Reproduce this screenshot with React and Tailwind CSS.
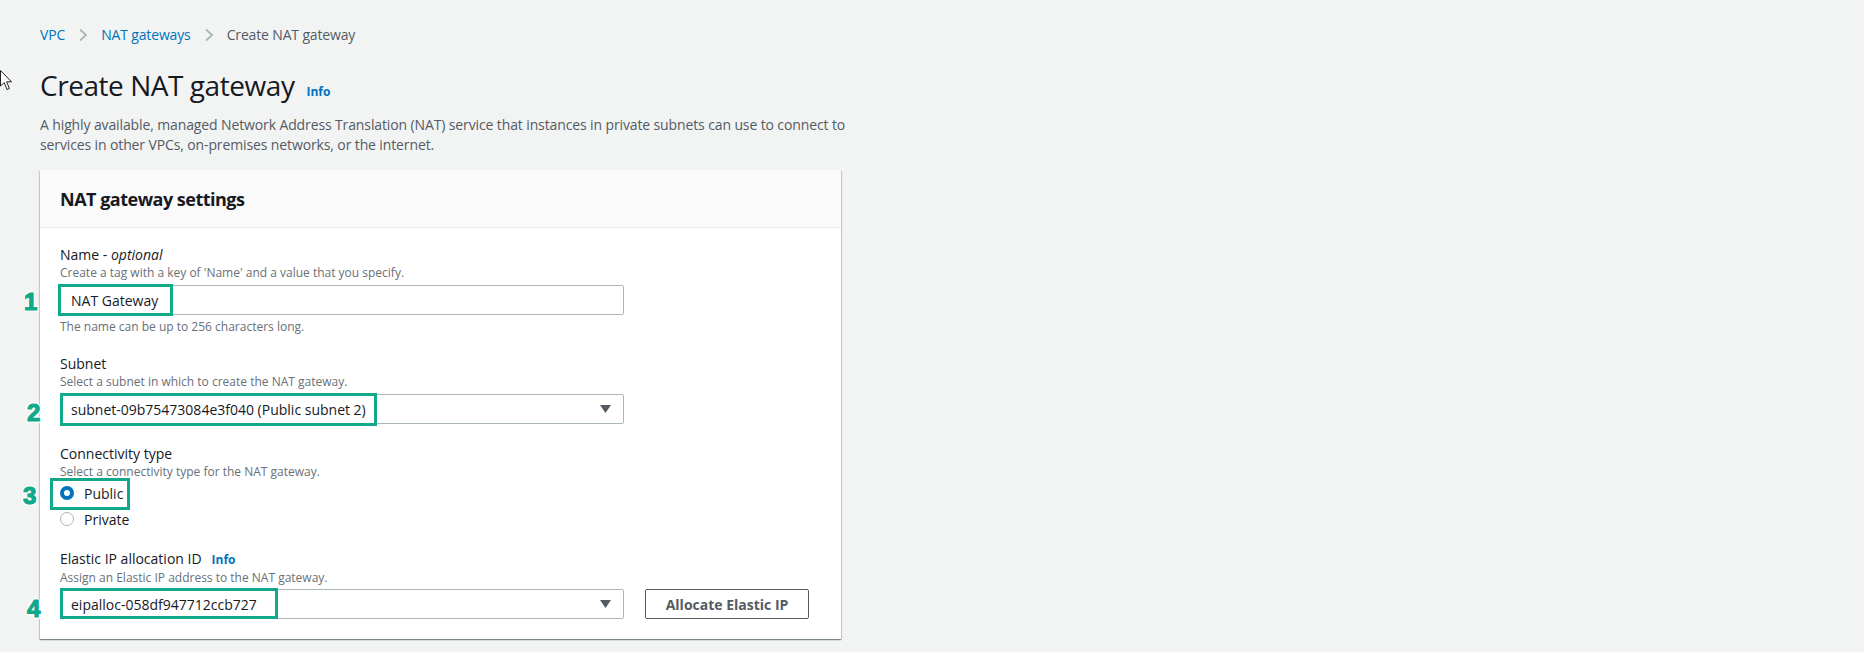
import React from "react";

const FONT = { fontFamily: '"Open Sans", "Noto Sans", Arial, sans-serif' };

function Num({ n, className }) {
  return (
    <div
      className={"absolute text-[24px] font-black leading-none text-[#12a88a] " + className}
      style={{
        fontFamily: '"Liberation Sans", Arial, sans-serif',
        WebkitTextStroke: "1.2px #12a88a",
        textShadow:
          "2px 0 0 #fff, -2px 0 0 #fff, 0 2px 0 #fff, 0 -2px 0 #fff, 1.5px 1.5px 0 #fff, -1.5px -1.5px 0 #fff, 1.5px -1.5px 0 #fff, -1.5px 1.5px 0 #fff",
      }}
    >
      {n}
    </div>
  );
}

function Caret() {
  return (
    <svg width="11" height="8" viewBox="0 0 11 8" className="absolute right-[12px] top-1/2 -translate-y-1/2">
      <path d="M0 0 H11 L5.5 8 Z" fill="#545b64" />
    </svg>
  );
}

function Chevron() {
  return (
    <svg width="10" height="14" viewBox="0 0 10 14" className="mx-[13px]">
      <path d="M2 1.5 L8 7 L2 12.5" fill="none" stroke="#aab7b8" strokeWidth="1.8" />
    </svg>
  );
}

export default function App() {
  return (
    <div className="relative min-h-[652px] w-full bg-[#f2f3f3] pl-[40px] text-[#16191f]" style={FONT}>
      {/* cursor */}
      <svg width="14" height="21" viewBox="0 0 14 21" className="absolute left-0 top-[70px]">
        <path d="M0.5 0.5 L0.5 16 L4.2 12.6 L7 19.5 L9.4 18.5 L6.6 11.8 L11.5 11.8 Z" fill="white" stroke="#222" strokeWidth="1" strokeLinejoin="round" />
      </svg>

      {/* breadcrumb */}
      <div className="flex items-center pt-[25px] text-[14px] leading-[20px] tracking-[-0.15px]">
        <span className="text-[#0073bb]">VPC</span>
        <Chevron />
        <span className="text-[#0073bb]">NAT gateways</span>
        <Chevron />
        <span className="text-[#545b64]">Create NAT gateway</span>
      </div>

      {/* title */}
      <div className="mt-[22px] flex items-baseline">
        <h1 className="text-[28px] font-normal leading-[36px] tracking-[-0.45px] text-[#16191f]">Create NAT gateway</h1>
        <span className="ml-[12px] text-[12px] font-bold text-[#0073bb]">Info</span>
      </div>

      <p className="mt-[12px] w-[820px] text-[14px] leading-[20px] tracking-[-0.12px] text-[#545b64]">
        A highly available, managed Network Address Translation (NAT) service that instances in private subnets can use to connect to services in other VPCs, on-premises networks, or the internet.
      </p>

      {/* card */}
      <div className="mt-[15px] w-[801px] bg-white shadow-[0_1px_1px_0_rgba(0,28,36,0.3),1px_1px_1px_0_rgba(0,28,36,0.15),-1px_1px_1px_0_rgba(0,28,36,0.15)]">
        <div className="flex h-[58px] items-center border-b border-[#eaeded] bg-[#fafafa] px-[20px]">
          <h2 className="text-[18px] font-bold leading-[22px] tracking-[-0.5px] text-[#16191f]">NAT gateway settings</h2>
        </div>

        <div className="px-[20px] pb-[20px] pt-[17px]">
          {/* Name */}
          <div className="relative">
            <div className="text-[14px] leading-[20px] text-[#16191f]">
              Name - <i>optional</i>
            </div>
            <div className="text-[12px] leading-[16px] text-[#687078]">Create a tag with a key of 'Name' and a value that you specify.</div>
            <div className="relative mt-[4px] flex h-[30px] w-[564px] items-center rounded-[2px] border border-[#aab7b8] bg-white px-[10px] text-[14px]">
              NAT Gateway
              <div className="absolute left-[-3px] top-[-2px] h-[32px] w-[115px] border-[3px] border-[#12a88a]" />
              <Num n="1" className="left-[-37px] top-[4px]" />
            </div>
            <div className="mt-[4px] text-[12px] leading-[16px] text-[#687078]">The name can be up to 256 characters long.</div>
          </div>

          {/* Subnet */}
          <div className="mt-[19px]">
            <div className="text-[14px] leading-[20px]">Subnet</div>
            <div className="text-[12px] leading-[16px] text-[#687078]">Select a subnet in which to create the NAT gateway.</div>
            <div className="relative mt-[4px] flex h-[30px] w-[564px] items-center rounded-[2px] border border-[#aab7b8] bg-white px-[10px] text-[14px]">
              subnet-09b75473084e3f040 (Public subnet 2)
              <Caret />
              <div className="absolute left-[-1px] top-[-2px] h-[33px] w-[317px] border-[3px] border-[#12a88a]" />
              <Num n="2" className="left-[-34px] top-[6px]" />
            </div>
          </div>

          {/* Connectivity */}
          <div className="mt-[20px]">
            <div className="text-[14px] leading-[20px]">Connectivity type</div>
            <div className="text-[12px] leading-[16px] text-[#687078]">Select a connectivity type for the NAT gateway.</div>
            <div className="relative flex h-[26px] items-center text-[14px]">
              <span className="box-border h-[14px] w-[14px] rounded-full border-[4px] border-[#0073bb] bg-white" />
              <span className="ml-[10px]">Public</span>
              <div className="absolute left-[-10px] top-[-2px] h-[32px] w-[80px] border-[3px] border-[#12a88a]" />
              <Num n="3" className="left-[-37px] top-[4px]" />
            </div>
            <div className="flex h-[26px] items-center text-[14px]">
              <span className="box-border h-[14px] w-[14px] rounded-full border border-[#aab7b8] bg-white" />
              <span className="ml-[10px]">Private</span>
            </div>
          </div>

          {/* Elastic IP */}
          <div className="mt-[17px]">
            <div className="flex items-baseline text-[14px] leading-[20px]">
              Elastic IP allocation ID
              <span className="ml-[10px] text-[12px] font-bold text-[#0073bb]">Info</span>
            </div>
            <div className="text-[12px] leading-[16px] text-[#687078]">Assign an Elastic IP address to the NAT gateway.</div>
            <div className="mt-[3px] flex items-center">
              <div className="relative flex h-[30px] w-[564px] items-center rounded-[2px] border border-[#aab7b8] bg-white px-[10px] text-[14px]">
                eipalloc-058df947712ccb727
                <Caret />
                <div className="absolute left-[-1px] top-[-2px] h-[31px] w-[218px] border-[3px] border-[#12a88a]" />
                <Num n="4" className="left-[-34px] top-[7px]" />
              </div>
              <button className="ml-[21px] h-[30px] w-[164px] rounded-[2px] border border-[#545b64] bg-white text-[14px] font-bold text-[#545b64]">
                Allocate Elastic IP
              </button>
            </div>
          </div>
        </div>
      </div>
    </div>
  );
}
